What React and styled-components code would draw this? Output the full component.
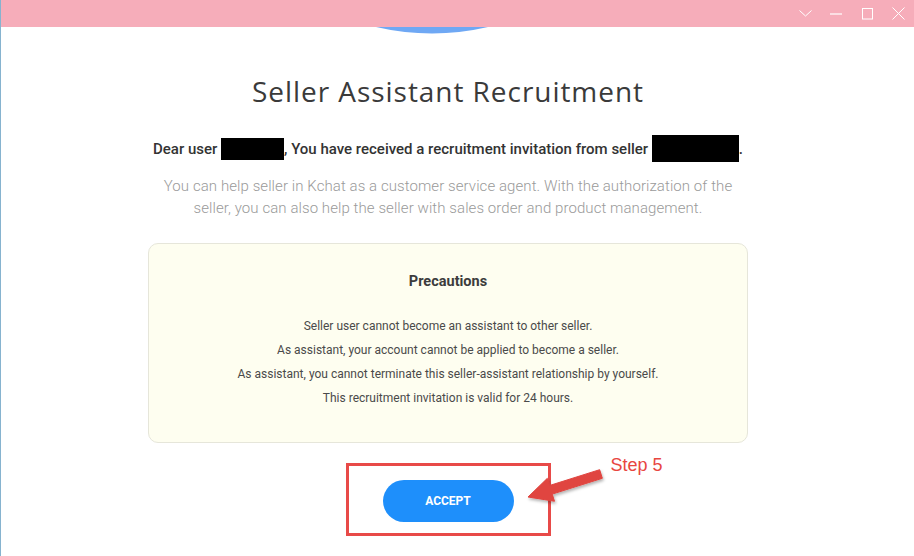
import React from 'react'
import styled, { createGlobalStyle } from 'styled-components'

const GlobalStyle = createGlobalStyle`
  html, body {
    margin: 0;
    padding: 0;
    background: #ffffff;
  }
  body {
    font-family: Roboto, "Liberation Sans", Arial, sans-serif;
  }
`

const Window = styled.div`
  width: 914px;
  height: 556px;
  overflow: hidden;
  box-sizing: border-box;
  border-left: 1px solid #86b3cf;
  background: #ffffff;
  display: flex;
  flex-direction: column;
`

const TitleBar = styled.div`
  height: 27px;
  flex-shrink: 0;
  background-color: #f6adba;
  display: flex;
  justify-content: flex-end;
  align-items: center;
`

const WinButton = styled.button`
  width: 31px;
  height: 27px;
  padding: 0;
  border: none;
  background: transparent;
  display: flex;
  align-items: center;
  justify-content: center;
  cursor: pointer;
`

const Main = styled.main`
  display: flex;
  flex-direction: column;
  align-items: center;
  padding-right: 19px;
`

const Arc = styled.svg`
  display: block;
  margin-right: 32px;
`

const Title = styled.h1`
  margin: 40px 0 0;
  font-family: "Open Sans", Lato, sans-serif;
  font-weight: 400;
  font-size: 28px;
  line-height: 34px;
  color: #3a3a3a;
  letter-spacing: 0.95px;
`

const Greeting = styled.p`
  margin: 27px 0 0;
  font-size: 15px;
  font-weight: 500;
  line-height: 28px;
  color: #333333;
  display: flex;
  align-items: center;
`

const Redacted = styled.span`
  display: inline-block;
  width: ${(p) => p.$w}px;
  height: ${(p) => p.$h}px;
  background: #000000;
  margin-top: ${(p) => p.$dy || 0}px;
`

const Intro = styled.p`
  margin: 12px 0 0;
  width: 600px;
  text-align: center;
  font-size: 15px;
  font-weight: 300;
  line-height: 22px;
  letter-spacing: 0.08px;
  color: #9a9a9a;
`

const NoticeBox = styled.section`
  margin-top: 24px;
  width: 600px;
  height: 200px;
  box-sizing: border-box;
  background: #fefef0;
  border: 1px solid #e6e6da;
  border-radius: 10px;
  padding-top: 28px;
  text-align: center;
`

const NoticeTitle = styled.h2`
  margin: 0;
  font-size: 14.5px;
  font-weight: 700;
  line-height: 20px;
  color: #3c3c3c;
`

const NoticeList = styled.ul`
  list-style: none;
  margin: 22px 0 0;
  padding: 0;
`

const NoticeItem = styled.li`
  font-size: 12px;
  line-height: 24px;
  color: #4a4a4a;
`

const ActionFrame = styled.div`
  position: relative;
  margin-top: 20px;
  width: 205px;
  height: 73px;
  box-sizing: border-box;
  border: 3px solid #e84a48;
  padding-top: 14px;
  display: flex;
  justify-content: center;
  align-items: flex-start;
`

const AcceptButton = styled.button`
  width: 131px;
  height: 42px;
  border: none;
  border-radius: 21px;
  background: #1e8ffb;
  color: #ffffff;
  font-family: Roboto, sans-serif;
  font-size: 12px;
  font-weight: 700;
  cursor: pointer;
`

const StepLabel = styled.span`
  position: absolute;
  left: 262px;
  top: -11px;
  font-family: "Liberation Sans", Arial, sans-serif;
  font-size: 18px;
  color: #e8463f;
  white-space: nowrap;
`

const Arrow = styled.svg`
  position: absolute;
  left: 172px;
  top: -1px;
  overflow: visible;
`

const items = [
  'Seller user cannot become an assistant to other seller.',
  'As assistant, your account cannot be applied to become a seller.',
  'As assistant, you cannot terminate this seller-assistant relationship by yourself.',
  'This recruitment invitation is valid for 24 hours.',
]

export default function App() {
  return (
    <>
      <GlobalStyle />
      <Window>
        <TitleBar>
          <WinButton aria-label="menu">
            <svg width="13" height="7" viewBox="0 0 13 7">
              <path d="M0.5 0.5 L6.5 6 L12.5 0.5" fill="none" stroke="#fff" strokeWidth="1" />
            </svg>
          </WinButton>
          <WinButton aria-label="minimize">
            <svg width="13" height="2" viewBox="0 0 13 2">
              <path d="M0 1 H12" stroke="#fff" strokeWidth="1.2" />
            </svg>
          </WinButton>
          <WinButton aria-label="maximize">
            <svg width="12" height="12" viewBox="0 0 12 12">
              <rect x="0.5" y="0.5" width="10" height="10.5" fill="none" stroke="#fff" strokeWidth="1" />
            </svg>
          </WinButton>
          <WinButton aria-label="close">
            <svg width="13" height="13" viewBox="0 0 13 13">
              <path d="M0.5 0.5 L12.5 12.5 M12.5 0.5 L0.5 12.5" stroke="#fff" strokeWidth="1" />
            </svg>
          </WinButton>
        </TitleBar>
        <Main>
          <Arc width="112" height="7" viewBox="0 0 112 7">
            <path d="M0 0 H112 Q56 13 0 0 Z" fill="#6fa8f4" />
          </Arc>
          <Title>Seller Assistant Recruitment</Title>
          <Greeting>
            Dear user&nbsp;
            <Redacted $w={63} $h={22} />
            , You have received a recruitment invitation from seller&nbsp;
            <Redacted $w={87} $h={27} $dy={-2} />
            .
          </Greeting>
          <Intro>
            You can help seller in Kchat as a customer service agent. With the authorization of the
            seller, you can also help the seller with sales order and product management.
          </Intro>
          <NoticeBox>
            <NoticeTitle>Precautions</NoticeTitle>
            <NoticeList>
              {items.map((t) => (
                <NoticeItem key={t}>{t}</NoticeItem>
              ))}
            </NoticeList>
          </NoticeBox>
          <ActionFrame>
            <AcceptButton>ACCEPT</AcceptButton>
            <StepLabel>Step 5</StepLabel>
            <Arrow width="90" height="45" viewBox="0 0 90 45">
              <defs>
                <filter id="sh" x="-20%" y="-20%" width="140%" height="160%">
                  <feDropShadow dx="1" dy="2" stdDeviation="1.5" floodColor="#000" floodOpacity="0.3" />
                </filter>
              </defs>
              <polygon
                points="7,32 26.3,13.35 28.55,20.5 78.65,4.7 81.35,13.3 31.25,29.1 33.5,36.25"
                fill="#e0443f"
                strokeLinejoin="round"
                stroke="#e0443f"
                strokeWidth="1"
                filter="url(#sh)"
              />
            </Arrow>
          </ActionFrame>
        </Main>
      </Window>
    </>
  )
}
